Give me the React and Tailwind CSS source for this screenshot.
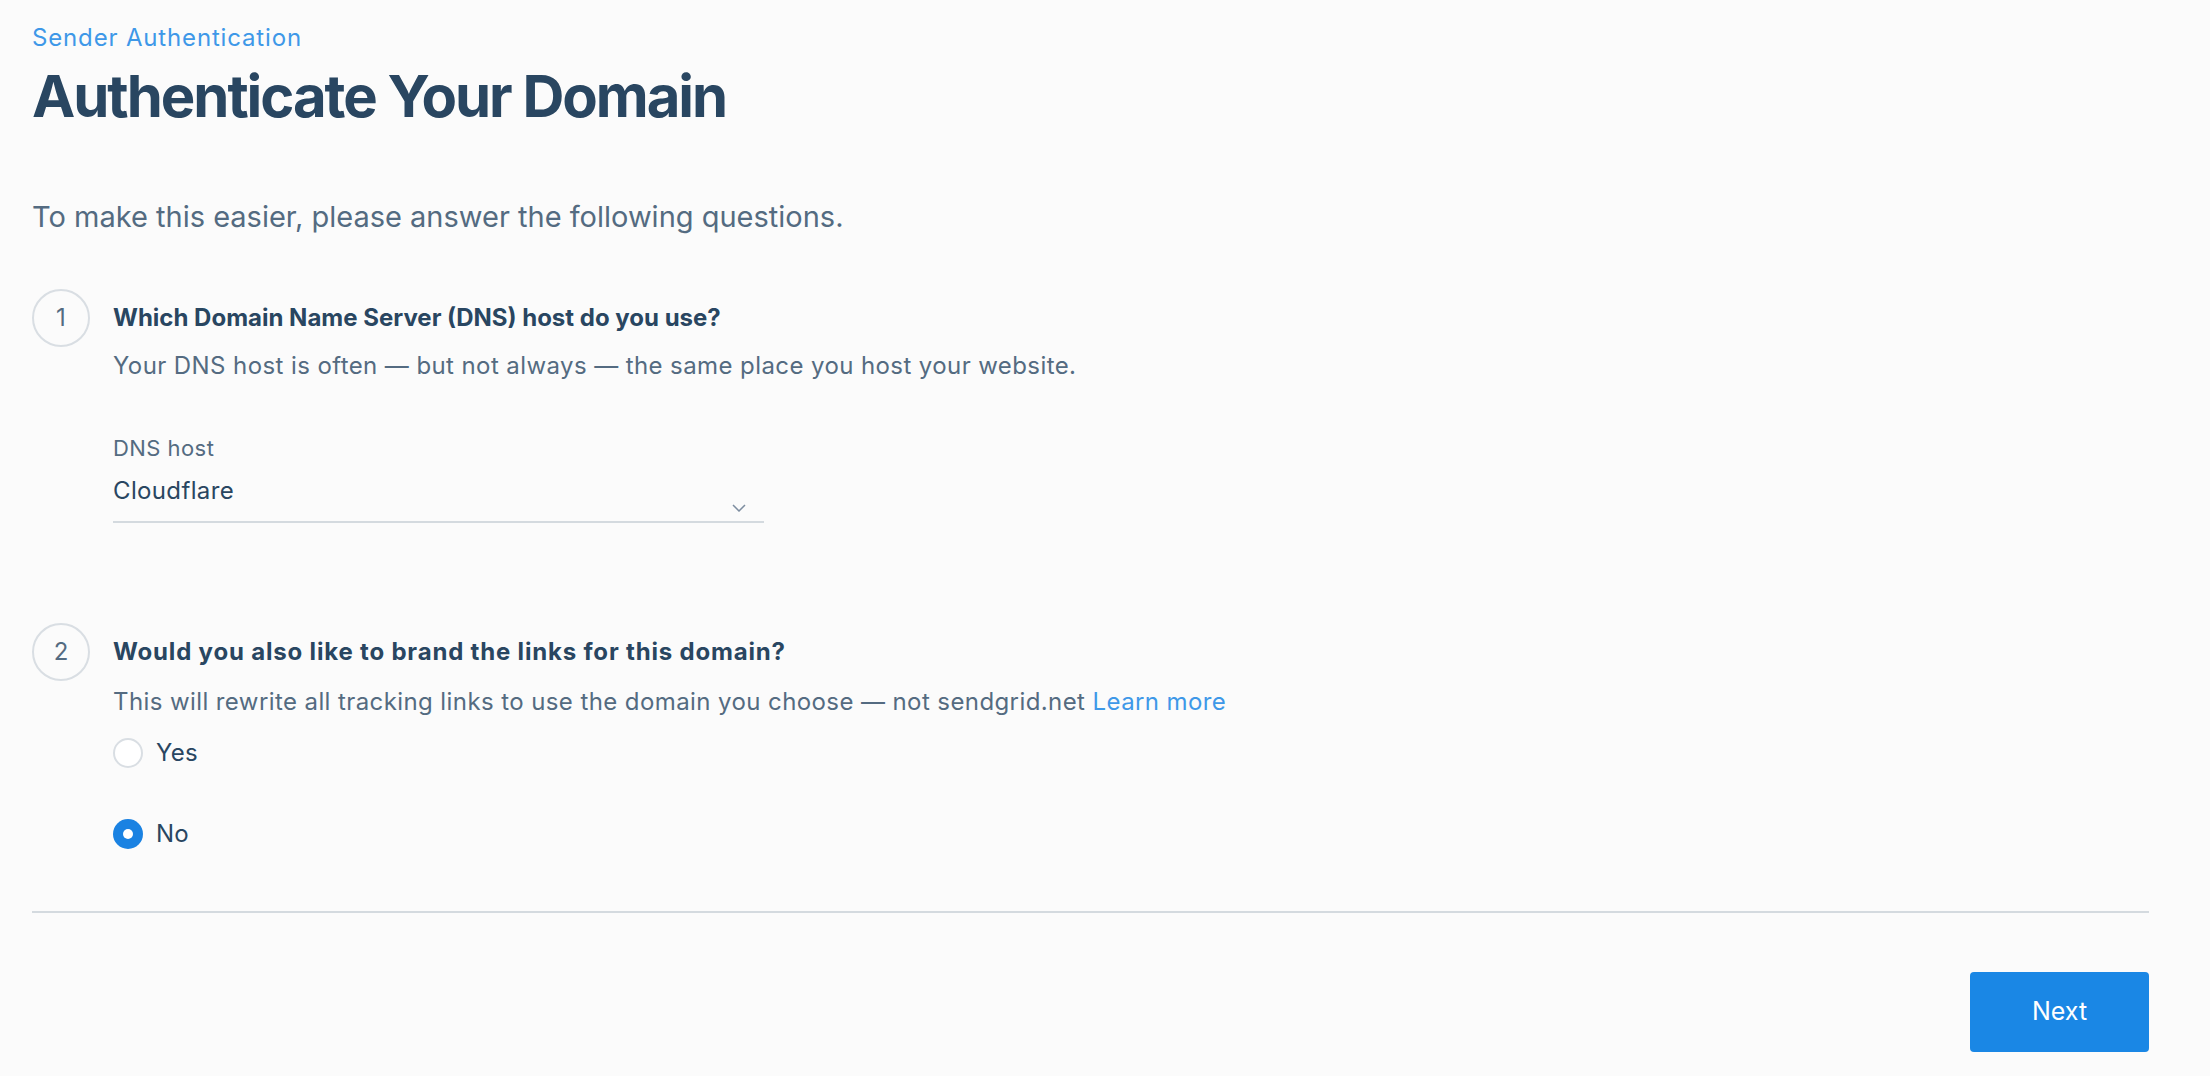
import React, { useState } from "react";

function StepCircle({ n }) {
  return (
    <div className="w-[58px] h-[58px] shrink-0 rounded-full border-2 border-[#d9dee3] flex items-center justify-center text-[24px] text-[#546b81]">
      {n}
    </div>
  );
}

function Radio({ label, checked, onClick }) {
  return (
    <button type="button" onClick={onClick} className="flex items-center gap-[13px] h-[32px] text-left">
      {checked ? (
        <span className="w-[30px] h-[30px] rounded-full bg-[#1a82e2] flex items-center justify-center">
          <span className="w-[10px] h-[10px] rounded-full bg-white" />
        </span>
      ) : (
        <span className="w-[30px] h-[30px] rounded-full border-2 border-[#d9dee3] bg-white" />
      )}
      <span className="text-[24px] leading-[32px] tracking-[0.01em] text-[#294661]">{label}</span>
    </button>
  );
}

export default function App() {
  const [brand, setBrand] = useState("no");

  return (
    <div className="min-h-screen bg-[#fbfbfb] font-['Inter','Noto_Sans',sans-serif] pl-8 pr-[61px] pt-[22px] pb-6">
      <p className="text-[24px] leading-[32px] tracking-[0.035em] text-[#3e98e8]">Sender Authentication</p>
      <h1 className="mt-[10px] text-[58px] leading-[64px] font-bold tracking-[-0.035em] text-[#294661]">
        Authenticate Your Domain
      </h1>
      <p className="mt-[69px] text-[29px] leading-[40px] text-[#546b81]">
        To make this easier, please answer the following questions.
      </p>

      {/* step 1 */}
      <div className="mt-[52px] flex gap-[23px]">
        <StepCircle n={1} />
        <div className="pt-[13px]">
          <h2 className="text-[24px] leading-[32px] font-bold text-[#294661]">
            Which Domain Name Server (DNS) host do you use?
          </h2>
          <p className="mt-[16px] text-[24px] leading-[32px] tracking-[0.017em] text-[#546b81]">
            Your DNS host is often — but not always — the same place you host your website.
          </p>
          <div className="mt-[52px]">
            <label className="block text-[22px] leading-[28px] tracking-[0.02em] text-[#546b81]">DNS host</label>
            <div className="mt-[13px] w-[651px] flex items-end justify-between border-b-2 border-[#d4dadf] pb-[14px]">
              <span className="text-[24px] leading-[32px] tracking-[0.015em] text-[#294661]">Cloudflare</span>
              <svg width="14" height="8" viewBox="0 0 14 8" fill="none" className="mr-[18px] mb-[-5px]">
                <path d="M1 1l6 6 6-6" stroke="#7d8da0" strokeWidth="1.5" />
              </svg>
            </div>
          </div>
        </div>
      </div>

      {/* step 2 */}
      <div className="mt-[100px] flex gap-[23px]">
        <StepCircle n={2} />
        <div className="pt-[13px]">
          <h2 className="text-[24px] leading-[32px] font-bold tracking-[0.034em] text-[#294661]">
            Would you also like to brand the links for this domain?
          </h2>
          <p className="mt-[18px] text-[24px] leading-[32px] tracking-[0.017em] text-[#546b81]">
            This will rewrite all tracking links to use the domain you choose — not sendgrid.net{" "}
            <a href="#" className="text-[#3e98e8]">Learn more</a>
          </p>
          <div className="mt-[19px] flex flex-col gap-[49px]">
            <Radio label="Yes" checked={brand === "yes"} onClick={() => setBrand("yes")} />
            <Radio label="No" checked={brand === "no"} onClick={() => setBrand("no")} />
          </div>
        </div>
      </div>

      <hr className="mt-[61px] border-t-2 border-[#d4dadf]" />

      <div className="mt-[59px] flex justify-end">
        <button className="w-[179px] h-[80px] rounded-[4px] bg-[#1a87e5] text-white text-[25px]">Next</button>
      </div>
    </div>
  );
}
